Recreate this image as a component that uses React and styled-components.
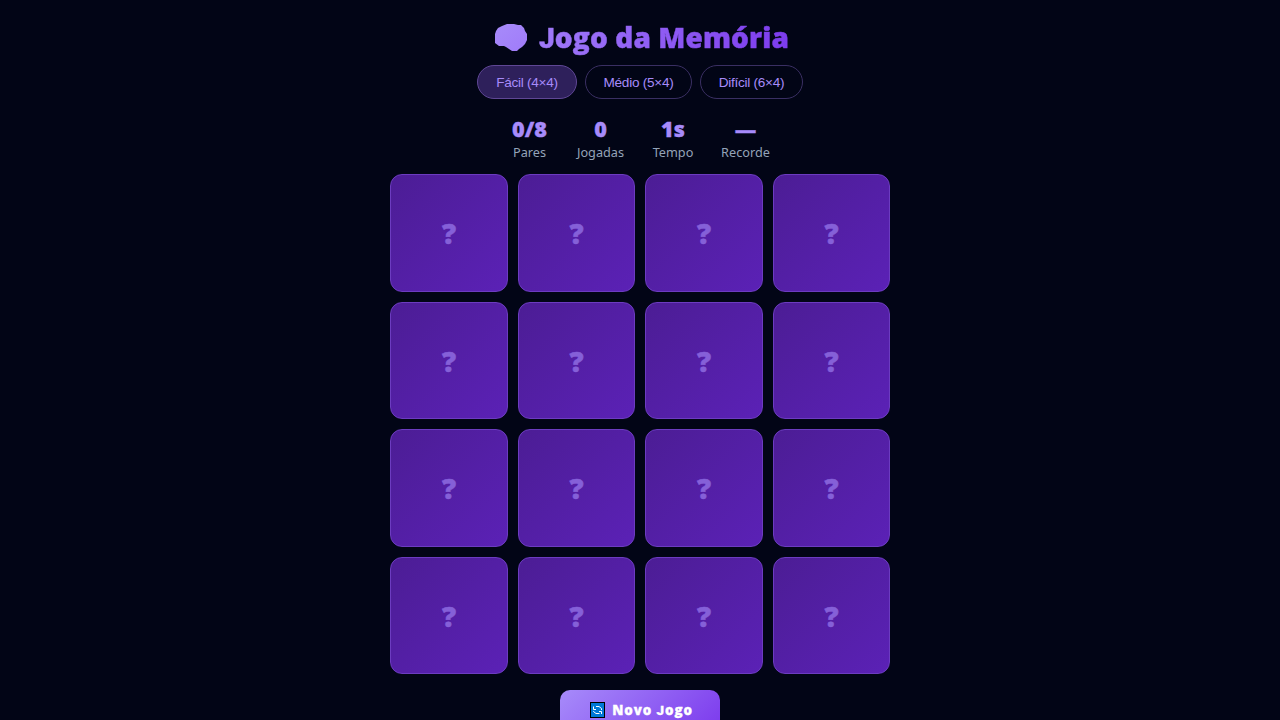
import React from "react";
import styled, { createGlobalStyle } from "styled-components";

const GlobalStyle = createGlobalStyle`
  *, *::before, *::after { box-sizing: border-box; }
  html, body { margin: 0; height: 100%; background: #020516; overflow: hidden; }
`;

const Page = styled.main`
  display: flex;
  flex-direction: column;
  align-items: center;
  height: 100vh;
  overflow: hidden;
  padding-top: 16px;
  background: #020516;
  font-family: "Noto Sans", sans-serif;
`;

const Header = styled.header`
  display: flex;
  align-items: center;
  width: 294px;
  height: 43px;
  margin-bottom: 6px;
`;

const BrainIcon = styled.svg`
  display: block;
  flex-shrink: 0;
  width: 34px;
  height: 30px;
  margin: 0 11px 2px 1px;
`;

const Title = styled.h1`
  margin: 0;
  width: 252px;
  flex-shrink: 0;
  white-space: nowrap;
  font: 800 28px/43px "Open Sans", sans-serif;
  letter-spacing: 0.12px;
  background: linear-gradient(100deg, #a07bf9, #7c3aed);
  -webkit-background-clip: text;
  background-clip: text;
  color: transparent;
  -webkit-text-stroke: 0.5px transparent;
`;

const Initial = styled.span`
  font-family: Roboto, sans-serif;
  font-weight: 900;
`;

const Levels = styled.nav`
  display: flex;
  gap: 8px;
  margin-bottom: 16px;
`;

const LevelButton = styled.button`
  width: ${(p) => p.$width}px;
  height: 34px;
  padding: 1px 0 0;
  border: 1px solid ${(p) => (p.$active ? "#5f4795" : "#3a2f63")};
  border-radius: 17px;
  background: ${(p) => (p.$active ? "#2e205b" : "transparent")};
  color: #a78bfa;
  font: 13.6px/16px "Liberation Sans", sans-serif;
  letter-spacing: -0.27px;
  white-space: nowrap;
`;

const Stats = styled.section`
  display: flex;
  gap: 28px;
  height: 45px;
  padding-left: 1px;
  margin-bottom: 14px;
`;

const Stat = styled.div`
  display: flex;
  flex-direction: column;
  align-items: center;
  width: ${(p) => p.$width}px;
  white-space: nowrap;
`;

const StatValue = styled.strong`
  color: #a78bfa;
  font-family: "Open Sans", sans-serif;
  font-size: 21.6px;
  font-weight: 800;
  line-height: 28px;
  -webkit-text-stroke: 0.4px #a78bfa;
`;

const StatLabel = styled.span`
  color: #94a3b8;
  font-size: 12.7px;
  line-height: 19px;
`;

const Board = styled.section`
  display: grid;
  grid-template-columns: repeat(4, 1fr);
  grid-auto-rows: 117.5px;
  gap: 10px;
  width: 500px;
  margin-bottom: 16px;
`;

const Card = styled.button`
  display: flex;
  align-items: center;
  justify-content: center;
  padding: 0.5px 0 0 0.5px;
  border: 1px solid #6c3cc0;
  border-radius: 12px;
  background: linear-gradient(135deg, #4c1d95, #5b21b6);
  color: #8560d8;
  font: 800 28px/40px "Open Sans", sans-serif;
  -webkit-text-stroke: 0.5px #8560d8;
`;

const NewGame = styled.button`
  display: flex;
  flex-shrink: 0;
  align-items: center;
  justify-content: center;
  gap: 7px;
  width: 160px;
  height: 40px;
  padding: 0 0 0 3px;
  border: 0;
  border-radius: 10px;
  background: linear-gradient(135deg, #a78bfa, #7c3aed);
  color: #fff;
  font: 800 13.4px/20px "Open Sans", sans-serif;
  letter-spacing: 0.9px;
  -webkit-text-stroke: 0.3px #fff;
  white-space: nowrap;
`;

const RefreshIcon = styled.svg`
  display: block;
  flex-shrink: 0;
  width: 15px;
  height: 16px;
`;

const levels = [
  { label: "Fácil (4×4)", width: 100, active: true },
  { label: "Médio (5×4)", width: 107 },
  { label: "Difícil (6×4)", width: 103 },
];

const stats = [
  { label: "Pares", value: "0/8", width: 37 },
  { label: "Jogadas", value: "0", width: 49 },
  { label: "Tempo", value: "1s", width: 40 },
  { label: "Recorde", value: "—", width: 49 },
];

export default function App() {
  return (
    <Page>
      <GlobalStyle />
      <Header>
        <BrainIcon viewBox="0 0 34 30" aria-hidden="true">
          <defs>
            <linearGradient id="brain" x1="0" y1="0" x2="1" y2="1">
              <stop stopColor="#a78bfa" />
              <stop offset="1" stopColor="#a07bf9" />
            </linearGradient>
          </defs>
          <path
            fill="url(#brain)"
            d="M1 12L2 9L4 6L8 4L13 2H20L24 3H27L30 6L31 9L33 12V18L31 22L28 25L25 27L23 29H18L15 27L12 25L10 24H5L1 21Z"
          />
        </BrainIcon>
        <Title><Initial>J</Initial>ogo da Memória</Title>
      </Header>
      <Levels>
        {levels.map((l) => (
          <LevelButton key={l.label} $width={l.width} $active={l.active}>
            {l.label}
          </LevelButton>
        ))}
      </Levels>
      <Stats>
        {stats.map((s) => (
          <Stat key={s.label} $width={s.width}>
            <StatValue>{s.value}</StatValue>
            <StatLabel>{s.label}</StatLabel>
          </Stat>
        ))}
      </Stats>
      <Board>
        {Array.from({ length: 16 }, (_, i) => (
          <Card key={i}>?</Card>
        ))}
      </Board>
      <NewGame>
        <RefreshIcon viewBox="0 0 15 16" aria-hidden="true">
          <rect width="15" height="16" fill="#000" />
          <rect x="1" y="1" width="13" height="14" fill="#0078d7" />
          <path
            d="M3.5 4.5V7.5H6M6 4.5H9L11.5 6.5V8M11.5 12V9.5H9M9.5 11.5H6L3.5 9.5V9"
            fill="none"
            stroke="#fff"
            strokeWidth="1"
          />
        </RefreshIcon>
        <span>Novo <Initial>J</Initial>ogo</span>
      </NewGame>
    </Page>
  );
}
